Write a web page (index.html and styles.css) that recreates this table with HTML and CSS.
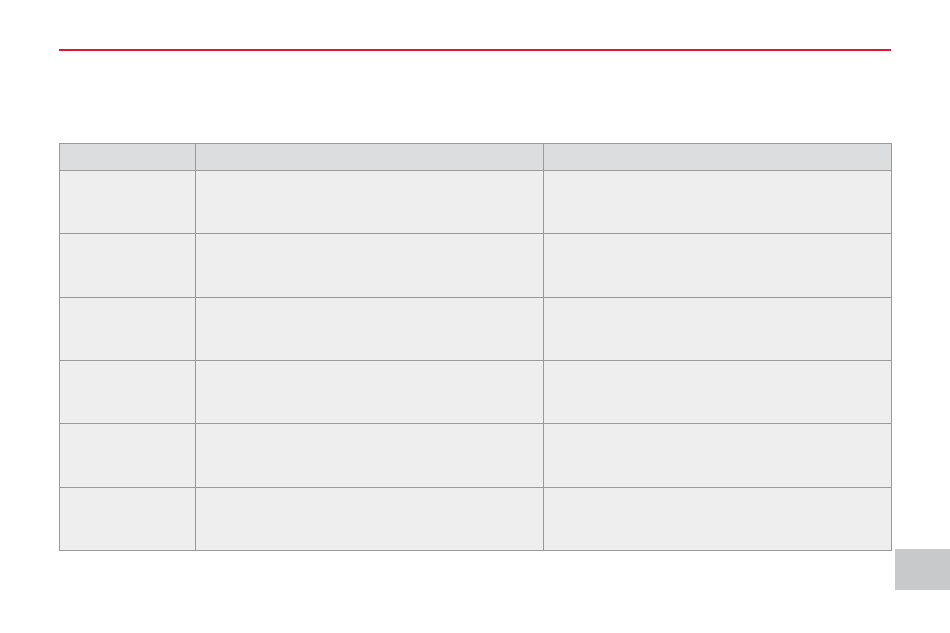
FILE: index.html
```html
<!DOCTYPE html>
<html>
<head>
<meta charset="utf-8">
<link rel="stylesheet" href="styles.css">
</head>
<body>
<div class="page">
  <div class="rule"></div>
  <div class="grid">
    <div class="hd"></div><div class="hd"></div><div class="hd"></div>
    <div class="cell"></div><div class="cell"></div><div class="cell"></div>
    <div class="cell"></div><div class="cell"></div><div class="cell"></div>
    <div class="cell"></div><div class="cell"></div><div class="cell"></div>
    <div class="cell"></div><div class="cell"></div><div class="cell"></div>
    <div class="cell"></div><div class="cell"></div><div class="cell"></div>
    <div class="cell"></div><div class="cell"></div><div class="cell"></div>
  </div>
  <div class="tab"></div>
</div>
</body>
</html>
```
FILE: styles.css
```css
html, body {
  margin: 0;
  padding: 0;
  background: #ffffff;
  font-family: "Liberation Sans", Arial, sans-serif;
}
.page {
  width: 950px;
  height: 633px;
  position: relative;
  padding-top: 49px;
  box-sizing: border-box;
}
.rule {
  margin-left: 59px;
  width: 832px;
  height: 2px;
  background-color: rgb(226, 22, 52);
}
.grid {
  margin-top: 92px;
  margin-left: 59px;
  width: 833px;
  box-sizing: border-box;
  padding: 1px;
  gap: 1px;
  background: #999999;
  display: grid;
  grid-template-columns: 135px 347px 347px;
  grid-template-rows: 26px 62px 63px 62px 62px 63px 62px;
}
.hd { background: #dcdddf; }
.cell { background: #edeeed; }
.tab {
  position: absolute;
  left: 895px;
  top: 549px;
  width: 55px;
  height: 41px;
  background: #c8c9cb;
}
```
